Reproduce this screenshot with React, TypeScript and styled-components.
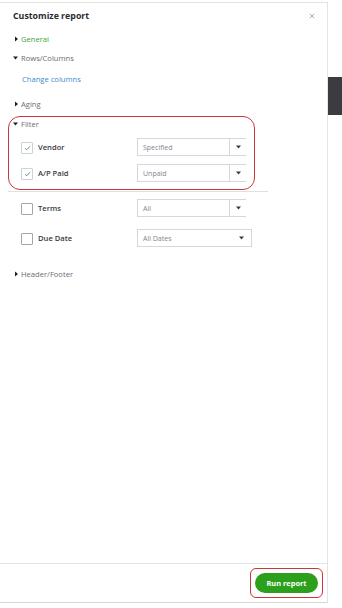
import React, { ReactElement } from 'react';
import styled, { createGlobalStyle } from 'styled-components';

const GlobalStyle = createGlobalStyle`
  html, body {
    margin: 0;
    padding: 0;
    background: #ffffff;
  }
  body {
    font-family: "Open Sans", "Liberation Sans", sans-serif;
    -webkit-font-smoothing: antialiased;
  }
`;

const Page = styled.div`
  display: flex;
  width: 342px;
  height: 608px;
  padding-top: 2px;
  box-sizing: border-box;
`;

const Panel = styled.div`
  display: flex;
  flex-direction: column;
  width: 328px;
  height: 601px;
  box-sizing: border-box;
  border-top: 1px solid #e3e3e3;
  border-right: 1px solid #e3e3e3;
  border-bottom: 1px solid #d6d6d6;
`;

const Side = styled.div`
  flex: 1;
  display: flex;
  flex-direction: column;
`;

const ScrollThumb = styled.div`
  margin-top: 75px;
  height: 38px;
  background: #3b3c40;
`;

const Header = styled.div`
  display: flex;
  align-items: center;
  justify-content: space-between;
  height: 26px;
  padding: 0 12px 0 13px;
`;

const Title = styled.div`
  font-size: 8.8px;
  font-weight: 700;
  color: #2b2c30;
`;

const Close = styled.button`
  border: 0;
  background: none;
  padding: 0;
  width: 6px;
  height: 6px;
  display: flex;
  cursor: pointer;
`;

const Body = styled.div`
  flex: 1;
  display: flex;
  flex-direction: column;
  padding-left: 8px;
`;

const Toggle = styled.div<{ $top: number; $color?: string }>`
  display: flex;
  align-items: center;
  gap: 2px;
  height: 14px;
  margin-top: ${(p) => p.$top}px;
  padding-left: 5px;
  font-size: 7.6px;
  color: ${(p) => p.$color ?? '#6b6c72'};
`;

const Caret = styled.svg`
  width: 6px;
  height: 6px;
  flex: none;
`;

const LinkText = styled.a`
  display: block;
  height: 14px;
  line-height: 14px;
  margin-top: 7px;
  padding-left: 14px;
  font-size: 7.6px;
  color: #3a8bd0;
  text-decoration: none;
`;

const Highlight = styled.div`
  width: 247px;
  box-sizing: border-box;
  margin-top: 5px;
  padding: 0 0 7px 4px;
  border: 1px solid #c9363b;
  border-radius: 12px;
  display: flex;
  flex-direction: column;

  & > ${Toggle} {
    padding-left: 0;
  }
`;

const FilterRows = styled.div<{ $gap: number; $top: number; $indent: number }>`
  display: flex;
  flex-direction: column;
  gap: ${(p) => p.$gap}px;
  margin-top: ${(p) => p.$top}px;
  padding-left: ${(p) => p.$indent}px;
`;

const Row = styled.div`
  display: flex;
  align-items: center;
  height: 18px;
`;

const Box = styled.span<{ $checked?: boolean }>`
  width: 12px;
  height: 12px;
  box-sizing: border-box;
  border: 1px solid ${(p) => (p.$checked ? '#cfd1d4' : '#a3a5a9')};
  border-radius: 1px;
  display: flex;
  align-items: center;
  justify-content: center;
  margin-top: 2px;
  flex: none;
`;

const Label = styled.span`
  width: 99px;
  margin-left: 5px;
  font-size: 7.6px;
  font-weight: 600;
  color: #393a3d;
`;

const Select = styled.div<{ $full?: boolean }>`
  display: flex;
  height: 18px;
  box-sizing: border-box;
  width: ${(p) => (p.$full ? 115 : 109)}px;
  border: 1px solid #d4d7dc;
  border-right: ${(p) => (p.$full ? '1px solid #d4d7dc' : '0')};
`;

const SelectValue = styled.span`
  flex: 1;
  display: flex;
  align-items: center;
  padding-left: 5px;
  font-size: 7px;
  color: #82858b;
`;

const SelectArrow = styled.span<{ $divided?: boolean }>`
  width: ${(p) => (p.$divided ? 16 : 20)}px;
  display: flex;
  align-items: center;
  justify-content: center;
  border-left: ${(p) => (p.$divided ? '1px solid #d4d7dc' : '0')};
`;

const Separator = styled.div`
  width: 260px;
  height: 1px;
  margin-top: 1px;
  background: #e0e0e0;
`;

const Footer = styled.div`
  display: flex;
  justify-content: flex-end;
  align-items: center;
  height: 38px;
  border-top: 1px solid #e4e4e4;
  padding-right: 4px;
`;

const Ring = styled.div`
  padding: 4px;
  border: 1px solid #c9363b;
  border-radius: 6px;
  display: flex;
`;

const RunButton = styled.button`
  width: 63px;
  height: 20px;
  border: 0;
  border-radius: 10px;
  background: #2ca01c;
  color: #ffffff;
  font-family: "Open Sans", "Liberation Sans", sans-serif;
  font-size: 7.4px;
  font-weight: 700;
  padding: 0;
  cursor: pointer;
`;

const CaretIcon = ({ open }: { open?: boolean }): ReactElement => (
  <Caret viewBox="0 0 6 6">
    {open ? <polygon points="0,1.5 5,1.5 2.5,4.6" fill="#1f2024" /> : <polygon points="2,0.5 5,3 2,5.5" fill="#1f2024" />}
  </Caret>
);

const Check = (): ReactElement => (
  <svg width="7" height="6" viewBox="0 0 7 6">
    <polyline points="1,3.2 2.8,4.8 6,1.2" fill="none" stroke="#6aa86a" strokeWidth="1" />
  </svg>
);

const Arrow = (): ReactElement => (
  <svg width="5" height="4" viewBox="0 0 5 4">
    <polygon points="0,0.5 5,0.5 2.5,3.5" fill="#393a3d" />
  </svg>
);

interface FilterItem {
  label: string;
  value: string;
  checked?: boolean;
  full?: boolean;
}

const FilterRow = ({ item }: { item: FilterItem }): ReactElement => (
  <Row>
    <Box $checked={item.checked}>{item.checked && <Check />}</Box>
    <Label>{item.label}</Label>
    <Select $full={item.full}>
      <SelectValue>{item.value}</SelectValue>
      <SelectArrow $divided={!item.full}>
        <Arrow />
      </SelectArrow>
    </Select>
  </Row>
);

const highlighted: FilterItem[] = [
  { label: 'Vendor', value: 'Specified', checked: true },
  { label: 'A/P Paid', value: 'Unpaid', checked: true },
];

const others: FilterItem[] = [
  { label: 'Terms', value: 'All' },
  { label: 'Due Date', value: 'All Dates', full: true },
];

const App = (): ReactElement => (
  <>
    <GlobalStyle />
    <Page>
      <Panel>
        <Header>
          <Title>Customize report</Title>
          <Close aria-label="Close">
            <svg width="6" height="6" viewBox="0 0 6 6">
              <path d="M1 1 L5 5 M5 1 L1 5" stroke="#a3a5a9" strokeWidth="0.9" />
            </svg>
          </Close>
        </Header>
        <Body>
          <Toggle $top={3} $color="#3aa53a">
            <CaretIcon />
            General
          </Toggle>
          <Toggle $top={5}>
            <CaretIcon open />
            Rows/Columns
          </Toggle>
          <LinkText href="#">Change columns</LinkText>
          <Toggle $top={11}>
            <CaretIcon />
            Aging
          </Toggle>
          <Highlight>
            <Toggle $top={0}>
              <CaretIcon open />
              Filter
            </Toggle>
            <FilterRows $gap={8} $top={7} $indent={8}>
              {highlighted.map((item) => (
                <FilterRow key={item.label} item={item} />
              ))}
            </FilterRows>
          </Highlight>
          <Separator />
          <FilterRows $gap={12} $top={7} $indent={13}>
            {others.map((item) => (
              <FilterRow key={item.label} item={item} />
            ))}
          </FilterRows>
          <Toggle $top={20}>
            <CaretIcon />
            Header/Footer
          </Toggle>
        </Body>
        <Footer>
          <Ring>
            <RunButton>Run report</RunButton>
          </Ring>
        </Footer>
      </Panel>
      <Side>
        <ScrollThumb />
      </Side>
    </Page>
  </>
);

export default App;
